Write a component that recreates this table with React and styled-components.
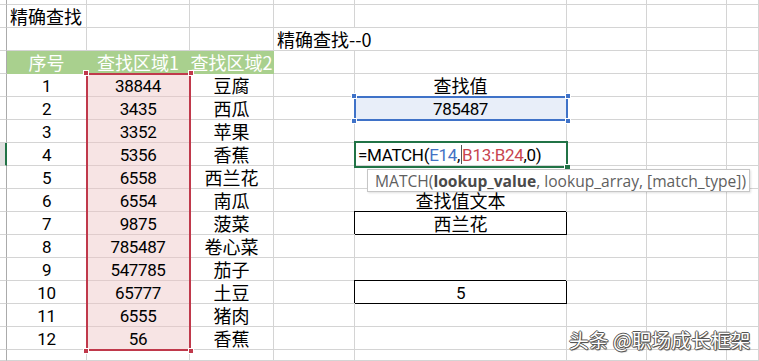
import React from "react";
import styled, { createGlobalStyle, css } from "styled-components";

const GRID = "#d4d4d4";
const HDR_GREEN = "#a9d08e";
const PINK = "#f7e4e4";
const PINK_LINE = "#e0cccc";
const RED = "#c0394b";
const BLUE = "#3f72c8";
const XL_GREEN = "#217346";

const GlobalStyle = createGlobalStyle`
  html, body { margin: 0; padding: 0; background: #fff; }
  body { width: 759px; height: 361px; overflow: hidden; }
`;

const Sheet = styled.div`
  position: relative;
  display: grid;
  grid-template-columns: 7px 80px 103px 84px 81px 212px 80px 80px 1fr;
  grid-template-rows: 5px repeat(15, 23px) 1fr;
  width: 759px;
  height: 361px;
  overflow: hidden;
  font-family: "Noto Sans CJK SC", "Noto Sans", sans-serif;
  font-size: 18px;
  color: #000;
`;

const RowHead = styled.div`
  grid-row: ${(p) => p.$r};
  grid-column: 1;
  box-sizing: border-box;
  border-bottom: 1px solid ${GRID};
  border-right: ${(p) => (p.$active ? `2px solid ${XL_GREEN}` : "1px solid #ababab")};
  background: ${(p) => (p.$active ? "#e1e1e1" : "#fff")};
`;

const Cell = styled.div`
  grid-row: ${(p) => p.$r};
  grid-column: ${(p) => p.$c} / span ${(p) => p.$span || 1};
  box-sizing: border-box;
  min-width: 0;
  display: flex;
  align-items: center;
  justify-content: ${(p) => (p.$left ? "flex-start" : "center")};
  padding-left: ${(p) => (p.$left ? "3px" : "0")};
  border-right: 1px solid ${(p) => p.$vline || GRID};
  border-bottom: 1px solid ${(p) => p.$hline || GRID};
  background: ${(p) => p.$fill || "#fff"};
  color: ${(p) => p.$color || "#000"};
  line-height: 22px;
  white-space: nowrap;
  ${(p) =>
    p.$boxed &&
    css`
      border-right-color: #000;
      border-bottom-color: #000;
      box-shadow: -1px -1px 0 0 #000;
    `}
`;

const Num = styled.span`
  font-family: Roboto, "Liberation Sans", sans-serif;
  font-size: 17px;
  letter-spacing: -0.4px;
  position: relative;
  top: 0.5px;
`;

const Range = styled.div`
  grid-row: ${(p) => p.$r} / span ${(p) => p.$rspan || 1};
  grid-column: ${(p) => p.$c};
  margin: ${(p) => p.$m || "-1px"};
  border: 2px solid ${(p) => p.$color};
  position: relative;
  z-index: 1;
  pointer-events: none;
`;

const Handle = styled.span`
  position: absolute;
  width: 4px;
  height: 4px;
  background: ${(p) => p.$color};
  border: 1px solid #fff;
  ${(p) => (p.$top ? "top: -5px;" : "bottom: -5px;")}
  ${(p) => (p.$left ? "left: -5px;" : "right: -5px;")}
`;

const FillHandle = styled.span`
  position: absolute;
  right: -4px;
  bottom: -4px;
  width: 5px;
  height: 5px;
  background: ${XL_GREEN};
  border-left: 1px solid #fff;
  border-top: 1px solid #fff;
`;

const Formula = styled(Num)`
  display: inline-flex;
  align-items: center;
  letter-spacing: -0.3px;
`;

const Ref = styled.span`
  color: ${(p) => p.$color};
`;

const Caret = styled.span`
  display: inline-block;
  width: 1px;
  height: 19px;
  margin: 0 0 0 1px;
  background: #555;
`;

const Tooltip = styled.div`
  position: absolute;
  left: 367px;
  top: 169px;
  width: 383px;
  height: 23px;
  box-sizing: border-box;
  border: 1px solid #c6c6c6;
  background: #fff;
  box-shadow: 1px 1px 2px rgba(0, 0, 0, 0.12);
  z-index: 2;
  display: flex;
  align-items: center;
  padding-left: 7px;
  font-family: "Open Sans", "Noto Sans", sans-serif;
  font-size: 15.6px;
  color: #5f5f5f;
  white-space: nowrap;
`;

const Arg = styled.b`
  font-weight: 700;
  color: #4a4a4a;
`;

const Watermark = styled.div`
  position: absolute;
  left: 569px;
  top: 329px;
  z-index: 3;
  font-family: "Noto Sans CJK SC", sans-serif;
  font-size: 19.8px;
  line-height: 22px;
  color: #fff;
  white-space: nowrap;
  text-shadow: 1px 0 0 #555, -1px 0 0 #555, 0 1px 0 #555, 0 -1px 0 #555,
    1px 1px 1px #444;
`;

const nums = [38844, 3435, 3352, 5356, 6558, 6554, 9875, 785487, 547785, 65777, 6555, 56];
const foods = ["豆腐", "西瓜", "苹果", "香蕉", "西兰花", "南瓜", "菠菜", "卷心菜", "茄子", "土豆", "猪肉", "香蕉"];

const eCol = [
  { text: "查找值" },
  { num: "785487", fill: "#e8eef9" },
  {},
  { formula: true },
  {},
  { text: "查找值文本" },
  { text: "西兰花", boxed: true },
  {},
  {},
  { num: "5", boxed: true },
  {},
  {},
];

const LAST_COLS = [7, 8, 9];

function EmptyRow({ r, from = 2 }) {
  const cells = [];
  for (let c = from; c <= 9; c++) cells.push(<Cell key={c} $r={r} $c={c} />);
  return cells;
}

export default function App() {
  const rows = [];

  rows.push(<RowHead key="h1" $r={1} />);
  rows.push(<EmptyRow key="e1" r={1} />);

  rows.push(<RowHead key="h2" $r={2} />);
  rows.push(
    <Cell key="a2" $r={2} $c={2} $left>
      精确查找
    </Cell>
  );
  rows.push(<EmptyRow key="e2" r={2} from={3} />);

  rows.push(<RowHead key="h3" $r={3} />);
  rows.push(<Cell key="a3" $r={3} $c={2} />);
  rows.push(<Cell key="b3" $r={3} $c={3} />);
  rows.push(<Cell key="c3" $r={3} $c={4} />);
  rows.push(
    <Cell key="d3" $r={3} $c={5} $span={2} $left>
      精确查找--0
    </Cell>
  );
  LAST_COLS.forEach((c) => rows.push(<Cell key={`x3${c}`} $r={3} $c={c} />));

  rows.push(<RowHead key="h4" $r={4} />);
  ["序号", "查找区域1", "查找区域2"].forEach((t, i) =>
    rows.push(
      <Cell key={`hd${i}`} $r={4} $c={2 + i} $fill={HDR_GREEN} $vline={HDR_GREEN} $hline={HDR_GREEN} $color="#fff">
        {t}
      </Cell>
    )
  );
  [5, 6, 7, 8, 9].forEach((c) => rows.push(<Cell key={`x4${c}`} $r={4} $c={c} />));

  nums.forEach((n, i) => {
    const r = 5 + i;
    const e = eCol[i];
    rows.push(<RowHead key={`h${r}`} $r={r} $active={i === 3} />);
    rows.push(
      <Cell key={`a${r}`} $r={r} $c={2}>
        <Num>{i + 1}</Num>
      </Cell>
    );
    rows.push(
      <Cell key={`b${r}`} $r={r} $c={3} $fill={PINK} $hline={PINK_LINE}>
        <Num>{n}</Num>
      </Cell>
    );
    rows.push(
      <Cell key={`c${r}`} $r={r} $c={4}>
        {foods[i]}
      </Cell>
    );
    rows.push(<Cell key={`d${r}`} $r={r} $c={5} />);
    if (e.formula) {
      rows.push(
        <Cell key={`e${r}`} $r={r} $c={6} $left>
          <Formula>
            =MATCH(<Ref $color="#4472c4">E14</Ref>,<Caret />
            <Ref $color="#c8454f">B13:B24</Ref>,0)
          </Formula>
        </Cell>
      );
    } else {
      rows.push(
        <Cell key={`e${r}`} $r={r} $c={6} $fill={e.fill} $boxed={e.boxed}>
          {e.num ? <Num>{e.num}</Num> : e.text}
        </Cell>
      );
    }
    LAST_COLS.forEach((c) => rows.push(<Cell key={`x${r}${c}`} $r={r} $c={c} />));
  });

  rows.push(<RowHead key="h17" $r={17} />);
  rows.push(<EmptyRow key="e17" r={17} />);

  return (
    <>
      <GlobalStyle />
      <Sheet>
        {rows}
        <Range $r={5} $rspan={12} $c={3} $color={RED}>
          <Handle $color={RED} $top $left />
          <Handle $color={RED} $top />
          <Handle $color={RED} $left />
          <Handle $color={RED} />
        </Range>
        <Range $r={6} $c={6} $color={BLUE}>
          <Handle $color={BLUE} $top $left />
          <Handle $color={BLUE} $top />
          <Handle $color={BLUE} $left />
          <Handle $color={BLUE} />
        </Range>
        <Range $r={8} $c={6} $color={XL_GREEN} $m="-2px -1px -2px -1px">
          <FillHandle />
        </Range>
        <Tooltip>
          MATCH(<Arg>lookup_value</Arg>, lookup_array, [match_type])
        </Tooltip>
        <Watermark>头条 @职场成长框架</Watermark>
      </Sheet>
    </>
  );
}
